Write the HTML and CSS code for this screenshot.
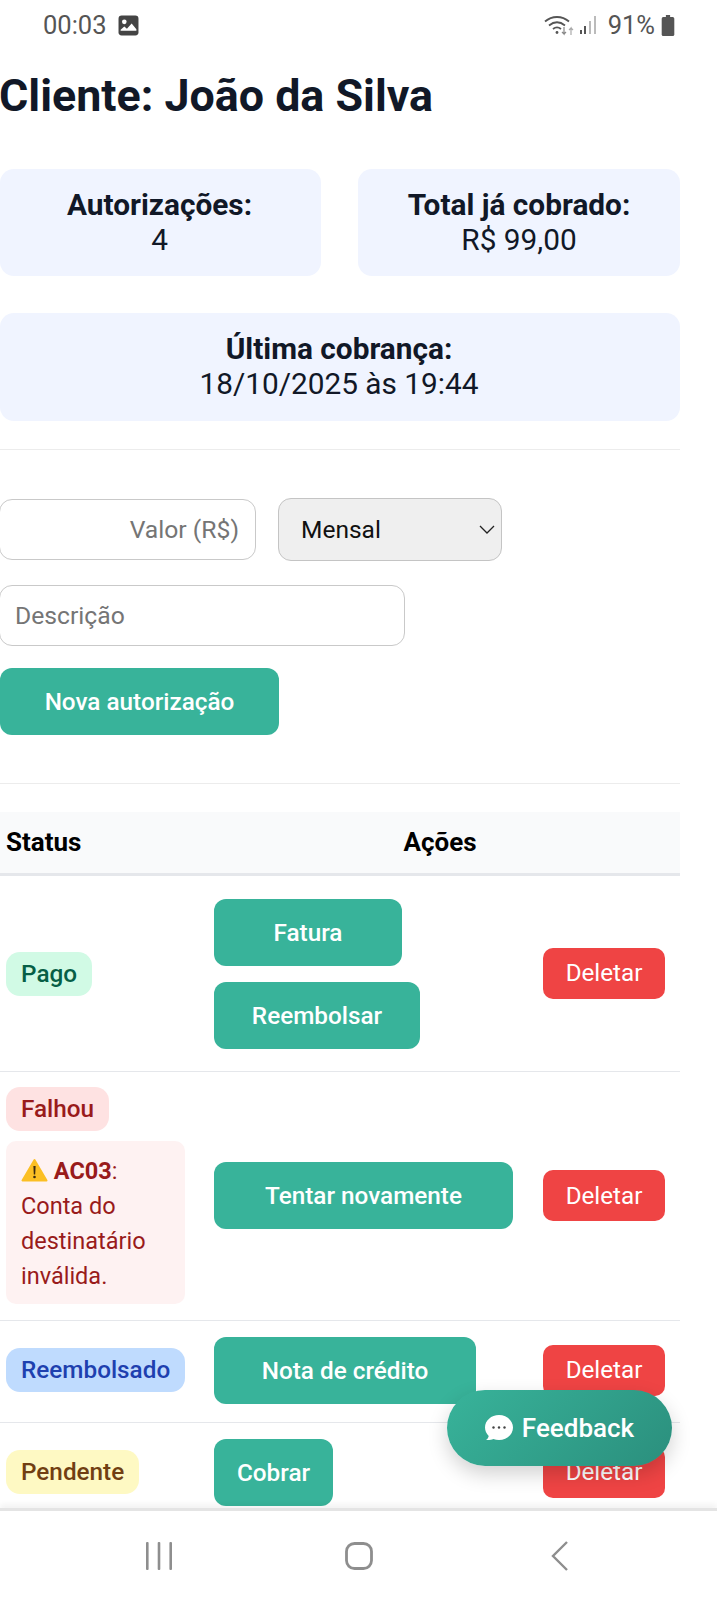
FILE: index.html
```html
<!DOCTYPE html>
<html lang="pt-BR">

<head>
  <meta charset="UTF-8">
  <meta name="viewport" content="width=device-width, initial-scale=1.0">
  <title>Cliente: João da Silva</title>
  <link rel="stylesheet" href="styles.css">
</head>

<body>
  <div class="phone">
    <div class="status-bar">
      <div class="status-left">
        <span>00:03</span>
        <svg viewBox="0 0 20 20" width="21" height="21">
          <rect x="0.500" y="0.500" width="19" height="19" rx="3" fill="#444"/>
          <circle cx="6" cy="6.500" r="2.200" fill="#fff"/>
          <path fill="#fff" d="M2.500 14l3.500-3 2.500 2L13 8l4.500 5.500V15h-15z"/>
        </svg>
      </div>
      <div class="status-right">
        <svg viewBox="0 0 30 22" width="30" height="22" fill="none" stroke="#555" stroke-width="1.800">
          <path d="M1 7.500C8 1.500 18 1.500 25 7.500"/>
          <path d="M5 11.500C10 7.500 16 7.500 21 11.500"/>
          <path d="M9 15C11.500 13 14.500 13 17 15"/>
          <circle cx="13" cy="18.500" r="1.400" fill="#555" stroke="none"/>
          <path d="M20 13v7l-2-2M20 20l2-2" stroke="#888" stroke-width="1.200"/>
          <path d="M27 21v-7l-2 2M27 14l2 2" stroke="#aaa" stroke-width="1.200"/>
        </svg>
        <svg class="icon-signal" viewBox="0 0 20 20" width="20" height="20" fill="#555">
          <rect x="1" y="15" width="2" height="4"/>
          <rect x="5" y="11" width="2" height="8"/>
          <rect x="10" y="6" width="2" height="13" fill="#bbb"/>
          <rect x="15" y="1" width="2" height="18" fill="#bbb"/>
        </svg>
        <span class="battery-text">91%</span>
        <svg class="icon-battery" viewBox="0 0 12 20" width="14" height="21" fill="#555">
          <rect x="4" y="0" width="4" height="2"/>
          <rect x="0" y="2" width="12" height="18" rx="1.500"/>
        </svg>
      </div>
    </div>

    <div class="screen">
      <div class="content">
        <h1 class="client-title">Cliente: João da Silva</h1>

        <div class="summary-row">
          <div class="summary-card summary-shift">
            <strong>Autorizações:</strong>
            <span>4</span>
          </div>
          <div class="summary-card">
            <strong>Total já cobrado:</strong>
            <span>R$ 99,00</span>
          </div>
        </div>
        <div class="summary-card summary-wide summary-shift">
          <strong>Última cobrança:</strong>
          <span>18/10/2025 às 19:44</span>
        </div>

        <hr class="divider divider-top">

        <form class="auth-form">
          <div class="form-row">
            <input class="field field-value" type="text" placeholder="Valor (R$)">
            <div class="fake-select">
              <span>Mensal</span>
              <svg viewBox="0 0 16 9" width="16" height="9" fill="none" stroke="#222" stroke-width="1.300">
                <path d="M1 1l7 7 7-7"/>
              </svg>
            </div>
          </div>
          <input class="field field-desc" type="text" placeholder="Descrição">
          <button class="btn btn-new" type="button">Nova autorização</button>
        </form>

        <hr class="divider divider-bottom">

        <table class="auth-table">
          <thead>
            <tr>
              <th class="col-status">Status</th>
              <th class="col-actions" colspan="2">Ações</th>
            </tr>
          </thead>
          <tbody>
            <tr class="row-paid">
              <td><span class="badge badge-paid">Pago</span></td>
              <td>
                <button class="btn btn-invoice" type="button">Fatura</button>
                <button class="btn btn-refund" type="button">Reembolsar</button>
              </td>
              <td class="cell-delete"><button class="btn-delete" type="button">Deletar</button></td>
            </tr>
            <tr class="row-failed">
              <td>
                <span class="badge badge-failed">Falhou</span>
                <div class="error-box">
                  <div>
                    <svg class="icon-warning" viewBox="0 0 27 24" width="27" height="24">
                      <path fill="#fbbf24" stroke="#fbbf24" stroke-width="2" stroke-linejoin="round" d="M13.500 2L1.500 22.500h24z"/>
                      <path fill="#3a2a10" d="M12.400 8h2.200l-.4 8.500h-1.400z"/>
                      <circle cx="13.500" cy="19" r="1.300" fill="#3a2a10"/>
                    </svg>
                    <b>AC03</b>:
                  </div>
                  <div>Conta do destinatário inválida.</div>
                </div>
              </td>
              <td><button class="btn btn-retry" type="button">Tentar novamente</button></td>
              <td class="cell-delete"><button class="btn-delete" type="button">Deletar</button></td>
            </tr>
            <tr class="row-refunded">
              <td><span class="badge badge-refunded">Reembolsado</span></td>
              <td><button class="btn btn-credit" type="button">Nota de crédito</button></td>
              <td class="cell-delete"><button class="btn-delete" type="button">Deletar</button></td>
            </tr>
            <tr class="row-pending">
              <td><span class="badge badge-pending">Pendente</span></td>
              <td><button class="btn btn-charge" type="button">Cobrar</button></td>
              <td class="cell-delete"><button class="btn-delete" type="button">Deletar</button></td>
            </tr>
          </tbody>
        </table>
      </div>

      <button class="feedback-btn" type="button">
        <svg viewBox="0 0 28 26" width="28" height="26">
          <path fill="#fff" d="M14 0c7.700 0 14 5.500 14 12.500S21.700 25 14 25c-2 0-4-.3-5.700-1-1.800.8-4.300 1.300-7.300 1 1.500-1 2.500-2.500 2.700-4C1.300 18.500 0 15.700 0 12.500 0 5.500 6.300 0 14 0z"/>
          <circle cx="8.500" cy="12.500" r="1.200" fill="#444"/>
          <circle cx="14" cy="12.500" r="1.200" fill="#444"/>
          <circle cx="19.500" cy="12.500" r="1.200" fill="#444"/>
        </svg>
        Feedback
      </button>
    </div>

    <div class="nav-bar">
      <svg viewBox="0 0 26 28" width="26" height="28" fill="#8e8e8e">
        <rect x="0" y="0" width="2.600" height="28" rx="1"/>
        <rect x="11.700" y="0" width="2.600" height="28" rx="1"/>
        <rect x="23.400" y="0" width="2.600" height="28" rx="1"/>
      </svg>
      <svg class="nav-home" viewBox="0 0 28 28" width="28" height="28" fill="none" stroke="#8e8e8e" stroke-width="2.800">
        <rect x="1.500" y="1.500" width="25" height="25" rx="8"/>
      </svg>
      <svg class="nav-back" viewBox="0 0 18 30" width="18" height="30" fill="none" stroke="#8e8e8e" stroke-width="2.400">
        <path d="M16 1L2 15l14 14"/>
      </svg>
    </div>
  </div>
</body>

</html>
```

FILE: styles.css
```css
* {
  box-sizing: border-box;
}

html,
body {
  margin: 0;
  padding: 0;
  background: #fff;
}

body {
  font-family: 'Roboto', 'Liberation Sans', sans-serif;
  color: #111827;
}

.phone {
  display: flex;
  flex-direction: column;
  width: 717px;
  height: 1600px;
  overflow: hidden;
}

/* barra do android */
.status-bar {
  display: flex;
  justify-content: space-between;
  align-items: center;
  flex: none;
  height: 50px;
  padding: 0 42px 0 43px;
  color: #555;
  font-size: 25.500px;
}

.status-left,
.status-right {
  display: flex;
  align-items: center;
}

.status-left {
  gap: 11px;
}

.icon-signal {
  margin-left: 5px;
}

.battery-text {
  margin-left: 9px;
}

.icon-battery {
  margin-left: 6px;
}

.screen {
  position: relative;
  flex: 1;
  overflow: hidden;
}

.content {
  width: 680px;
}

.client-title {
  margin: 0 0 0 -1px;
  padding-top: 18px;
  height: 119px;
  font-size: 44.800px;
  line-height: 56px;
  font-weight: 700;
  color: #111827;
}

.summary-row {
  display: grid;
  grid-template-columns: 321px 322px;
  gap: 37px;
}

.summary-card {
  display: flex;
  flex-direction: column;
  align-items: center;
  height: 107px;
  padding-top: 18px;
  border-radius: 14px;
  background: #f0f4ff;
  font-size: 29.800px;
  line-height: 35px;
  text-align: center;
}

.summary-card strong {
  font-weight: 700;
}

.summary-shift {
  padding-right: 2px;
}

.summary-wide {
  height: 108px;
  margin-top: 37px;
}

.divider {
  height: 1px;
  margin: 0;
  border: 0;
  background: #ececec;
}

.divider-top {
  margin-top: 28px;
}

.divider-bottom {
  margin-top: 48px;
}

.auth-form {
  display: flex;
  flex-direction: column;
  align-items: flex-start;
  padding-top: 48px;
}

.form-row {
  display: flex;
  align-items: center;
  gap: 22px;
}

.field {
  height: 61px;
  border: 1.500px solid #c9c9c9;
  border-radius: 13px;
  background: #fff;
  font-family: inherit;
  font-size: 24.700px;
  padding: 0 15px;
  outline: none;
}

.field::placeholder {
  color: #757575;
  opacity: 1;
}

.field-value {
  width: 257px;
  margin-left: -1px;
  padding-right: 16px;
  text-align: right;
}

.field-desc {
  width: 406px;
  margin: 24px 0 0 -1px;
}

.fake-select {
  display: flex;
  justify-content: space-between;
  align-items: center;
  width: 224px;
  height: 63px;
  padding: 0 6px 0 22px;
  border: 1.500px solid #c4c4c4;
  border-radius: 13px;
  background: #efefef;
  color: #111;
  font-size: 24.500px;
}

.btn {
  display: block;
  height: 67px;
  border: 0;
  border-radius: 12px;
  background: #38b39a;
  color: #fff;
  font-family: inherit;
  font-size: 24.300px;
  font-weight: 500;
  text-align: center;
  padding: 0;
}

.btn-new {
  width: 279px;
  margin-top: 22px;
}

.auth-table {
  width: 680px;
  margin-top: 28px;
  border-collapse: collapse;
  table-layout: fixed;
}

.auth-table th {
  height: 62px;
  padding: 0 6px;
  background: #f9fafb;
  border-bottom: 3px solid #e5e7eb;
  color: #000;
  font-size: 26px;
  font-weight: 700;
}

.col-status {
  width: 208px;
  text-align: left;
}

.auth-table .col-actions {
  padding-right: 14px;
  text-align: center;
}

.auth-table td {
  padding: 0 6px;
  border-bottom: 1.500px solid #e5e7eb;
  vertical-align: middle;
}

.auth-table td:last-child {
  width: 152px;
  padding: 0 15px 0 0;
  text-align: right;
}

.row-paid {
  height: 197px;
}

.auth-table .row-paid td:not(.cell-delete) {
  padding-top: 2px;
}

.row-failed {
  height: 249px;
}

.row-refunded {
  height: 102px;
}

.row-pending {
  height: 102px;
}

.auth-table .row-refunded td,
.auth-table .row-pending td {
  padding-bottom: 2px;
}

.badge {
  display: inline-block;
  height: 44px;
  padding: 0 15px;
  border-radius: 14px;
  font-size: 24.300px;
  font-weight: 500;
  line-height: 44px;
  vertical-align: top;
}

.badge-paid {
  background: #d1fae5;
  color: #065f46;
}

.badge-failed {
  background: #fee2e2;
  color: #991b1b;
}

.badge-refunded {
  background: #bfdbfe;
  color: #1e40af;
}

.badge-pending {
  background: #fef9c3;
  color: #713f12;
}

.error-box {
  width: 179px;
  margin-top: 10px;
  padding: 13px 15px 10px;
  border-radius: 10px;
  background: #fef2f2;
  color: #991b1b;
  font-size: 23.500px;
  line-height: 35px;
}

.icon-warning {
  vertical-align: -3px;
}

.btn-invoice {
  width: 188px;
}

.btn-refund {
  width: 206px;
  margin-top: 16px;
}

.btn-retry {
  width: 299px;
}

.btn-credit {
  width: 262px;
}

.btn-charge {
  width: 119px;
}

.btn-delete {
  width: 122px;
  height: 51px;
  border: 0;
  border-radius: 10px;
  background: #ef4444;
  color: #fff;
  font-family: inherit;
  font-size: 24.200px;
}

/* botao flutuante */
.feedback-btn {
  position: absolute;
  right: 45px;
  top: 1340px;
  display: flex;
  justify-content: center;
  align-items: center;
  gap: 9px;
  width: 225px;
  height: 76px;
  border: 0;
  border-radius: 38px;
  background: linear-gradient(135deg, #38b39a, #2b8f7d);
  box-shadow: 0 8px 20px rgba(0, 0, 0, 0.18);
  color: #fff;
  font-family: inherit;
  font-size: 26px;
  font-weight: 500;
}

.nav-bar {
  position: relative;
  display: flex;
  align-items: center;
  flex: none;
  height: 92px;
  padding: 0 0 0 146px;
  background: #fff;
  border-top: 3px solid #e4e4e4;
  box-shadow: 0 -4px 6px rgba(0, 0, 0, 0.05);
}

.nav-home {
  margin-left: 173px;
}

.nav-back {
  margin-left: 178px;
}
```
